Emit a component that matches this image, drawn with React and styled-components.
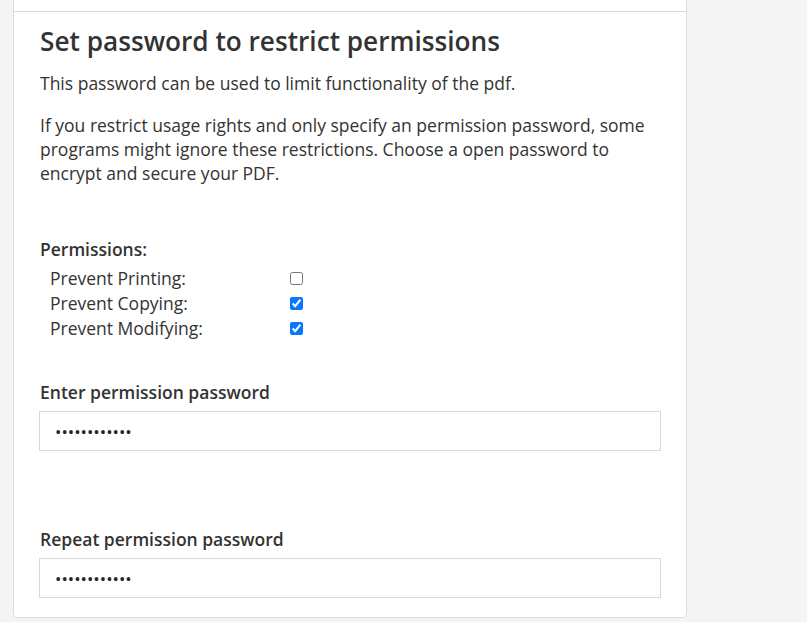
import styled, { createGlobalStyle } from "styled-components";

const GlobalStyle = createGlobalStyle`
  html, body {
    margin: 0;
    padding: 0;
    background: #f4f4f4;
    font-family: "Open Sans", "Noto Sans", sans-serif;
    color: #333;
  }
`;

const Page = styled.div`
  padding: 0 0 0 13px;
  width: 674px;
`;

const Card = styled.div`
  margin-top: -40px;
  background: #fff;
  border: 1px solid #dcdcdc;
  border-radius: 5px;
  margin-bottom: 5px;
`;

const CardHeader = styled.div`
  height: 50px;
  border-bottom: 1px solid #dcdcdc;
`;

const CardBody = styled.div`
  padding: 12px 26px 19px;
`;

const Title = styled.h2`
  font-size: 26.2px;
  font-weight: 600;
  line-height: 34px;
  margin: 0 0 13px;
`;

const Text = styled.p`
  font-size: 17.5px;
  line-height: 24px;
  margin: 0 0 18px;
`;

const Section = styled.div`
  margin-top: ${(p) => p.$gap || 0}px;
`;

const Label = styled.div`
  font-size: 17.5px;
  font-weight: 600;
  line-height: 24px;
  margin-bottom: ${(p) => p.$mb || 0}px;
`;

const PermList = styled.div`
  display: grid;
  grid-template-columns: 240px auto;
  padding-left: 10px;
  margin-top: 5px;
`;

const PermName = styled.span`
  font-size: 17.5px;
  line-height: 25px;
`;

const Check = styled.input.attrs({ type: "checkbox" })`
  width: 13px;
  height: 13px;
  margin: 6px 0 0;
  accent-color: #0a75ff;
`;

const Input = styled.input.attrs({ type: "password" })`
  display: block;
  box-sizing: border-box;
  width: calc(100% + 2px);
  margin-left: -1px;
  height: 40px;
  border: 1px solid #d8d8d8;
  border-radius: 0;
  padding: 0 15px;
  font-size: 17px;
  font-family: inherit;
  color: #222;
  outline: none;
  caret-color: #000;
`;

const permissions = [
  { name: "Prevent Printing:", checked: false },
  { name: "Prevent Copying:", checked: true },
  { name: "Prevent Modifying:", checked: true },
];

export default function App() {
  return (
    <Page>
      <GlobalStyle />
      <Card>
        <CardHeader />
        <CardBody>
          <Title>Set password to restrict permissions</Title>
          <Text>This password can be used to limit functionality of the pdf.</Text>
          <Text>
            If you restrict usage rights and only specify an permission password, some
            programs might ignore these restrictions. Choose a open password to encrypt
            and secure your PDF.
          </Text>
          <Section $gap={52}>
            <Label>Permissions:</Label>
            <PermList>
              {permissions.map((p) => (
                <>
                  <PermName key={p.name}>{p.name}</PermName>
                  <Check defaultChecked={p.checked} />
                </>
              ))}
            </PermList>
          </Section>
          <Section $gap={39}>
            <Label $mb={7}>Enter permission password</Label>
            <Input defaultValue="secretpass12" />
          </Section>
          <Section $gap={76}>
            <Label $mb={7}>Repeat permission password</Label>
            <Input defaultValue="secretpass12" autoFocus />
          </Section>
        </CardBody>
      </Card>
    </Page>
  );
}
